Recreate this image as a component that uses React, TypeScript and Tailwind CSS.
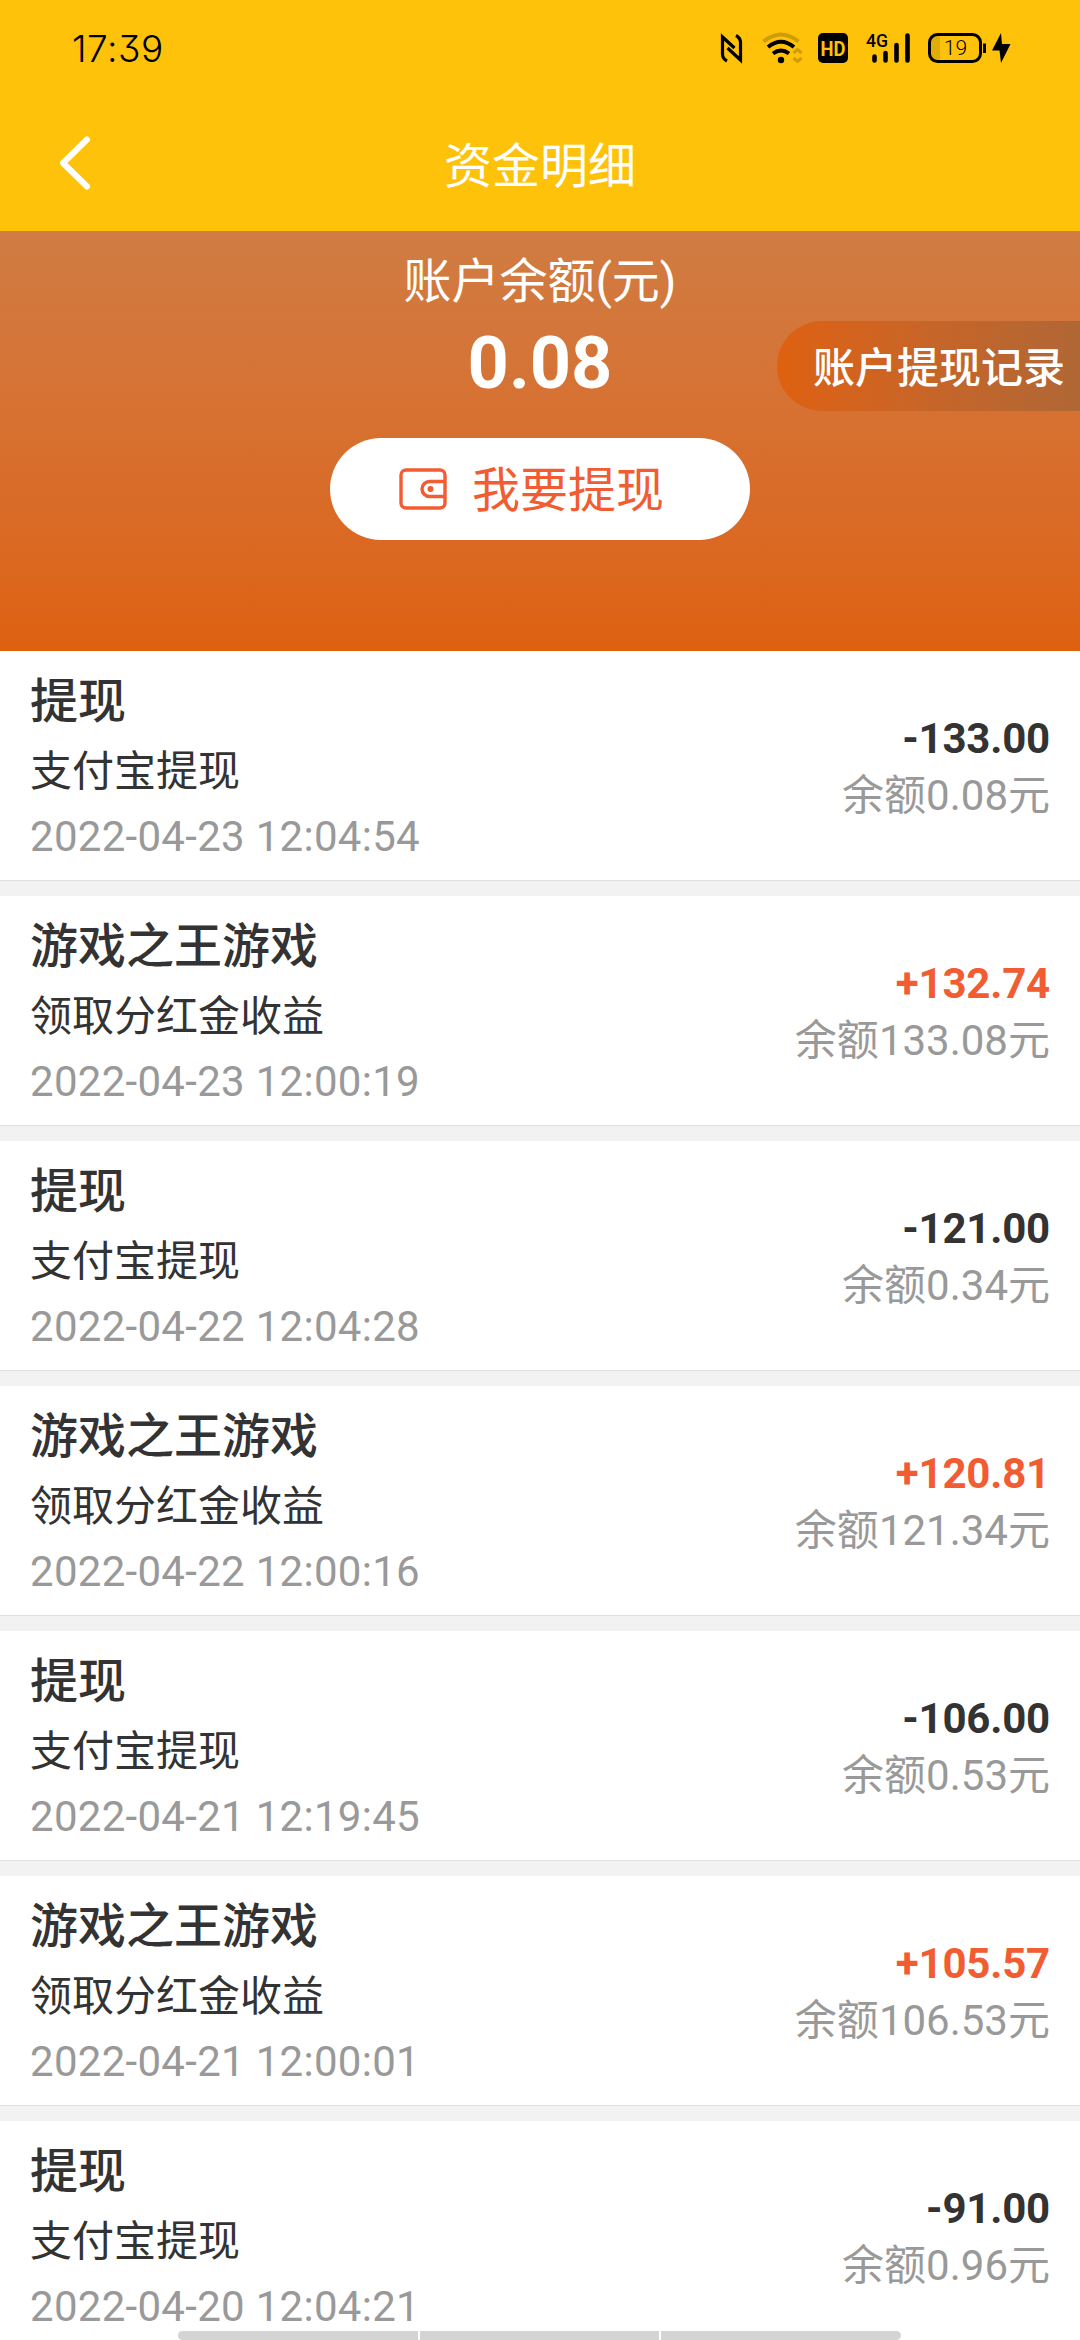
interface FundRecord {
  title: string;
  desc: string;
  time: string;
  amount: string;
  balance: string;
}

const records: FundRecord[] = [
  { title: '提现', desc: '支付宝提现', time: '2022-04-23 12:04:54', amount: '-133.00', balance: '0.08' },
  { title: '游戏之王游戏', desc: '领取分红金收益', time: '2022-04-23 12:00:19', amount: '+132.74', balance: '133.08' },
  { title: '提现', desc: '支付宝提现', time: '2022-04-22 12:04:28', amount: '-121.00', balance: '0.34' },
  { title: '游戏之王游戏', desc: '领取分红金收益', time: '2022-04-22 12:00:16', amount: '+120.81', balance: '121.34' },
  { title: '提现', desc: '支付宝提现', time: '2022-04-21 12:19:45', amount: '-106.00', balance: '0.53' },
  { title: '游戏之王游戏', desc: '领取分红金收益', time: '2022-04-21 12:00:01', amount: '+105.57', balance: '106.53' },
  { title: '提现', desc: '支付宝提现', time: '2022-04-20 12:04:21', amount: '-91.00', balance: '0.96' },
];

function StatusIcons() {
  return (
    <svg width="300" height="36" viewBox="720 30 300 36" fill="none" stroke="#000">
      {/* NFC */}
      <path d="M727 61 Q722.5 58.5 722.5 54 V37 L734.5 48" strokeWidth="3.2" />
      <path d="M736 35.5 Q740.5 38 740.5 42.5 V60 L727.5 48" strokeWidth="3.2" />
      {/* wifi */}
      <g strokeWidth="4">
        <path d="M763.5 41.5 Q781 27.5 798.5 41.5" stroke="#d09c06" />
        <path d="M768 47 Q781 36.5 794 47" />
        <path d="M773 53.5 Q781 47.5 789 53.5" />
      </g>
      <circle cx="781" cy="60" r="3.2" fill="#000" stroke="none" />
      <path d="M793.5 53 L797.5 49.5 L801.5 53 M793.5 58 L797.5 61.5 L801.5 58" stroke="#d09c06" strokeWidth="3" />
      {/* HD */}
      <rect x="818" y="33" width="30" height="30" rx="5" fill="#000" stroke="none" />
      <text x="833" y="55.5" textAnchor="middle" fontSize="21" fontWeight="700" textLength="25" lengthAdjust="spacingAndGlyphs" fill="#ffc20a" stroke="none" className="font-['Roboto',sans-serif]">HD</text>
      {/* signal */}
      <text x="866" y="47" fontSize="19" fontWeight="500" textLength="22" lengthAdjust="spacingAndGlyphs" fill="#000" stroke="none" className="font-['Roboto',sans-serif]">4G</text>
      <path d="M874.5 56.5V60.5M885.5 53V60.5M896.5 45V60.5M907.5 35.5V60.5" strokeWidth="4.6" strokeLinecap="round" />
      {/* battery */}
      <path d="M937 35 h3 v26 h-3 a7 7 0 0 1 -6 -7 v-12 a7 7 0 0 1 6 -7z" fill="#e2ac08" stroke="none" />
      <rect x="929.5" y="34.5" width="51" height="27" rx="8" strokeWidth="3" />
      <path d="M984.5 43.5V53" strokeWidth="3" />
      <text x="955.5" y="55" textAnchor="middle" fontSize="21" fontWeight="300" fill="#000" stroke="none" className="font-['Roboto',sans-serif]">19</text>
      <path d="M1001 33 L992 50.5 H999.5 L1001 63 L1010.5 44 H1002z" fill="#000" stroke="none" />
    </svg>
  );
}

function WalletIcon() {
  return (
    <svg width="48" height="42" viewBox="0 0 48 42" fill="none" stroke="#f15c32" strokeWidth="3.4">
      <rect x="2" y="2" width="44" height="38" rx="5" />
      <path d="M46 13.5 H30.5 a7.5 7.5 0 0 0 0 15 H46" />
      <circle cx="31.5" cy="21" r="3" fill="#f15c32" stroke="none" />
    </svg>
  );
}

function RecordRow({ record }: { record: FundRecord }) {
  const income = record.amount.startsWith('+');

  return (
    <li className="flex h-[245px] shrink-0 flex-col">
      <div className="flex h-[230px] items-center justify-between border-b border-[#e0e0e0] bg-white px-[30px]">
        <div className="flex flex-col pt-[3px]">
          <span className="h-[70px] text-[48px] leading-[70px] font-medium text-[#333]">{record.title}</span>
          <span className="h-[69px] text-[42px] leading-[69px] text-[#333]">{record.desc}</span>
          <span className="h-[61px] text-[42px] leading-[61px] tracking-[0.29px] text-[#999]">{record.time}</span>
        </div>
        <div className="flex flex-col items-end pt-0.5">
          <span className={`h-[57px] text-[42px] leading-[57px] font-bold tracking-[-0.2px] ${income ? 'text-[#f15c32]' : 'text-[#333]'}`}>
            {record.amount}
          </span>
          <span className="h-[57px] text-[42px] leading-[57px] text-[#999]">余额{record.balance}元</span>
        </div>
      </div>
    </li>
  );
}

export default function App() {
  return (
    <div className="relative flex h-[2340px] w-[1080px] flex-col overflow-hidden bg-[#f2f2f2] font-['Roboto','Noto_Sans_CJK_SC',sans-serif]">
      <header className="flex h-[231px] shrink-0 flex-col bg-[#ffc20a]">
        <div className="flex h-24 items-center justify-between pr-[60px] pl-[72px]">
          <span className="font-['Inter',sans-serif] text-[37px] leading-none font-light tracking-[0.5px] text-black [font-feature-settings:'cv09']">17:39</span>
          <StatusIcons />
        </div>
        <div className="grid h-[135px] grid-cols-[1fr_auto_1fr] items-center">
          <svg className="ml-[58px]" width="34" height="56" viewBox="0 0 34 56" fill="none" stroke="#fff" strokeWidth="6" strokeLinecap="round" strokeLinejoin="round">
            <path d="M29 3.5 L5 27 L29 50.5" />
          </svg>
          <h1 className="pt-1.5 text-[48px] leading-[70px] font-normal text-white">资金明细</h1>
        </div>
      </header>

      <section className="relative flex h-[420px] shrink-0 flex-col items-center bg-linear-to-b from-[#d07c43] to-[#de610f] pt-[15px] text-white">
        <p className="h-[71px] text-[48px] leading-[72px]">账户余额(元)</p>
        <p className="h-[94px] text-[72px] leading-[94px] font-bold">0.08</p>
        <button className="mt-[27px] flex h-[102px] w-[420px] items-center gap-[25px] rounded-full bg-white pl-[69px] text-[48px] text-[#f15c32]">
          <WalletIcon />
          <span className="pt-1">我要提现</span>
        </button>
        <a className="absolute top-[90px] right-0 flex h-[90px] w-[303px] items-center rounded-l-full bg-linear-to-r from-[#de610f] to-[#b06735] pt-1 pl-[36px] text-[42px] font-medium whitespace-nowrap">
          账户提现记录
        </a>
      </section>

      <ul className="flex flex-col">
        {records.map((record) => (
          <RecordRow key={record.time} record={record} />
        ))}
      </ul>

      {/* gesture hint bar */}
      <div className="absolute bottom-0 left-[178px] flex h-[9px] w-[723px] gap-[2px] overflow-hidden rounded-full">
        <span className="flex-1 bg-[#d4d4d4]" />
        <span className="flex-1 bg-[#d4d4d4]" />
        <span className="flex-1 bg-[#d4d4d4]" />
      </div>
    </div>
  );
}
